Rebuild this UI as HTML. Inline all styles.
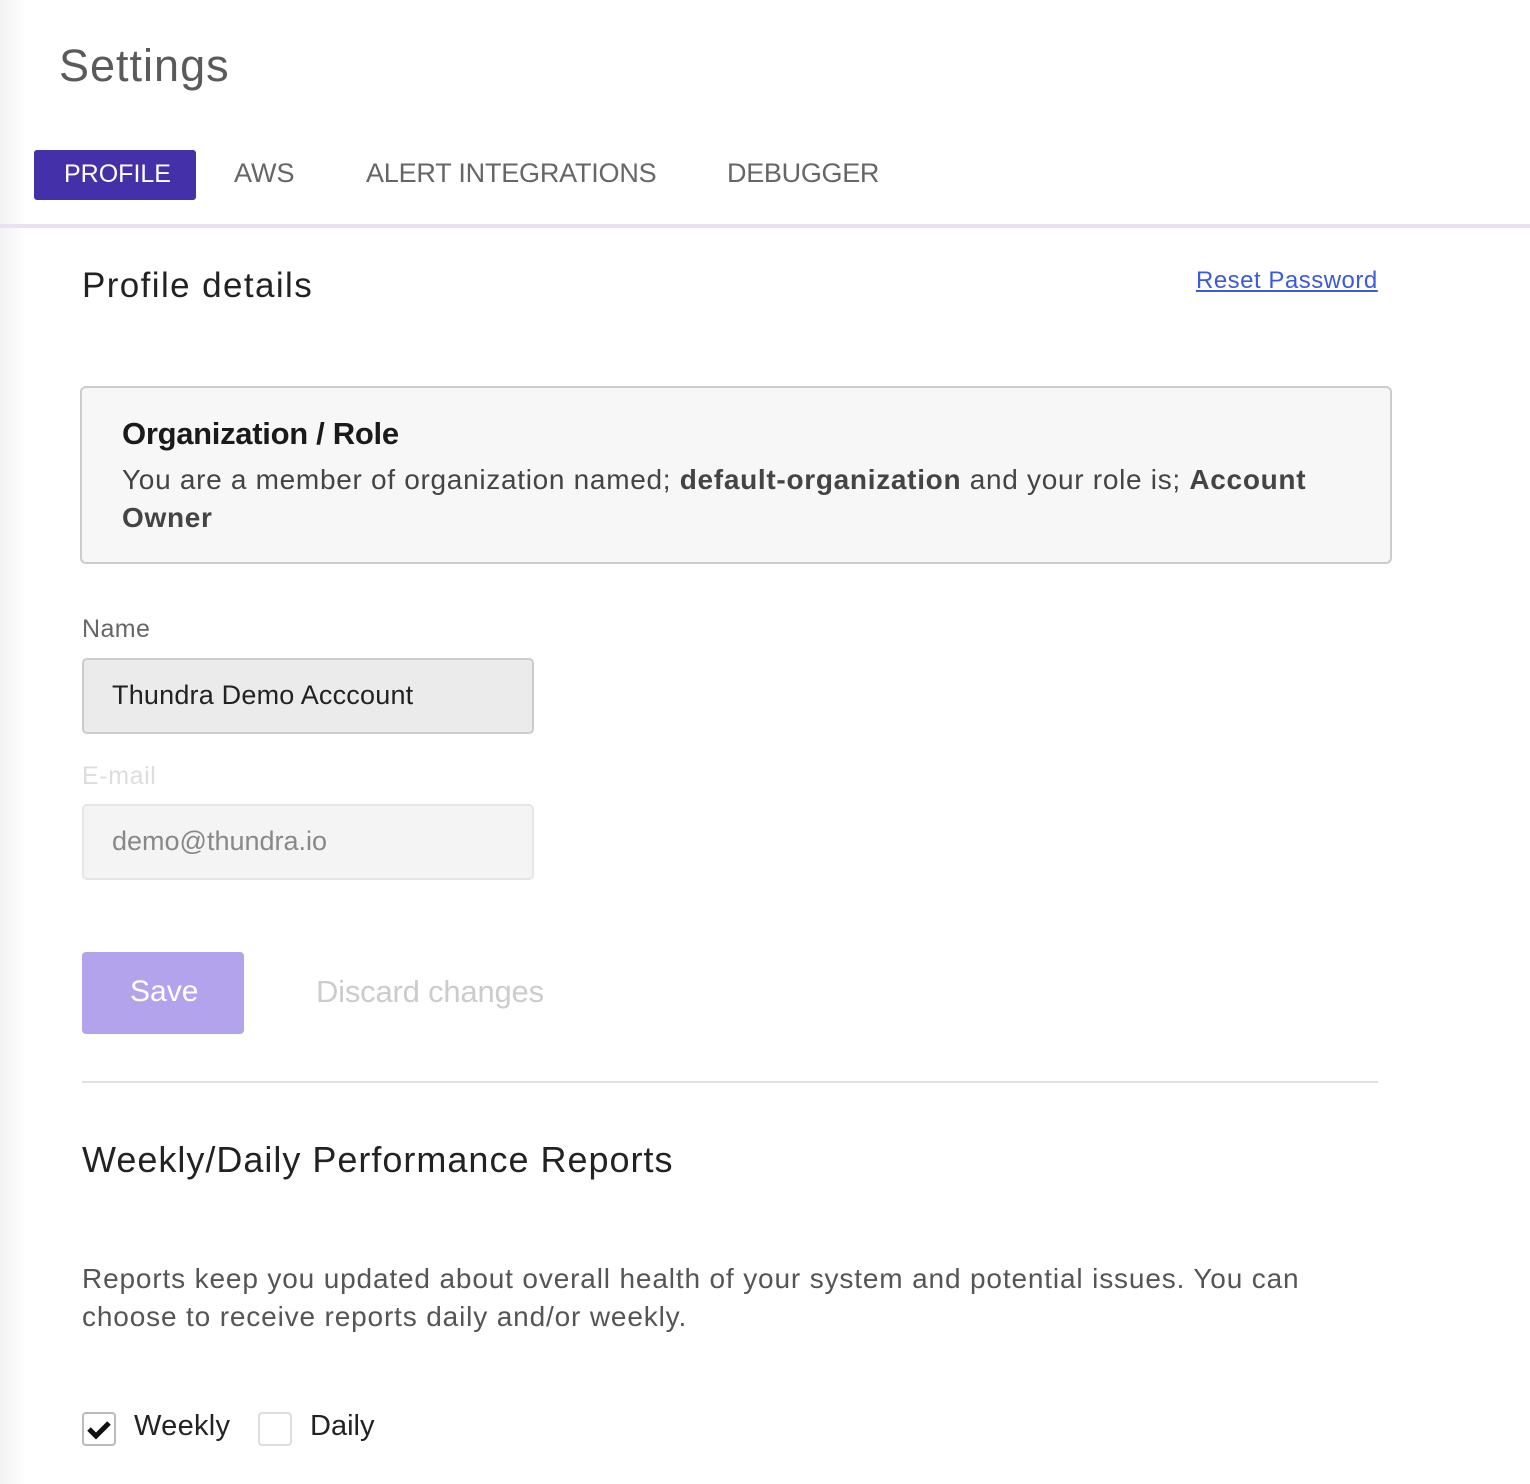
<!DOCTYPE html>
<html><head><meta charset="utf-8"><style>
html,body{margin:0;padding:0}
body{width:1530px;height:1484px;position:relative;background:#fff;font-family:"Liberation Sans",sans-serif;overflow:hidden}
.shadow{position:absolute;left:0;top:0;width:26px;height:1484px;background:linear-gradient(to right,#f2f2f2,#fff)}
.a{position:absolute;white-space:nowrap}
</style></head><body>
<div class="shadow"></div>
<div class="a" style="left:59px;top:40px;font-size:45px;color:#5a5a5a;letter-spacing:1px">Settings</div>
<div class="a" style="left:34px;top:150px;width:162px;height:50px;background:#4430a8;border-radius:3px"></div>
<div class="a" style="left:64px;top:160px;font-size:25px;color:#fff">PROFILE</div>
<div class="a" style="left:234px;top:158px;font-size:27px;color:#666">AWS</div>
<div class="a" style="left:366px;top:158px;font-size:27px;color:#666;letter-spacing:-0.2px">ALERT INTEGRATIONS</div>
<div class="a" style="left:727px;top:158px;font-size:27px;color:#666;letter-spacing:-0.3px">DEBUGGER</div>
<div class="a" style="left:0;top:224px;width:1530px;height:4px;background:#e8e2f0"></div>
<div class="a" style="left:82px;top:266px;font-size:35px;color:#222;letter-spacing:1.4px">Profile details</div>
<div class="a" style="left:1196px;top:267px;font-size:24px;color:#3b5bdb;text-decoration:underline;letter-spacing:0.5px">Reset Password</div>
<div class="a" style="left:80px;top:386px;width:1308px;height:174px;border:2px solid #ccc;border-radius:6px;background:#f7f7f7"></div>
<div class="a" style="left:122px;top:416px;font-size:31px;font-weight:bold;color:#1a1a1a;letter-spacing:-0.3px">Organization / Role</div>
<div class="a" style="left:122px;top:461px;font-size:28px;color:#444;line-height:38px;letter-spacing:0.7px">You are a member of organization named; <b>default-organization</b> and your role is; <b>Account</b><br><b>Owner</b></div>
<div class="a" style="left:82px;top:615px;font-size:25px;color:#666;letter-spacing:0.4px">Name</div>
<div class="a" style="left:82px;top:658px;width:448px;height:72px;border:2px solid #ccc;border-radius:5px;background:#ebebeb"></div>
<div class="a" style="left:112px;top:680px;font-size:27px;color:#222;letter-spacing:0.2px">Thundra Demo Acccount</div>
<div class="a" style="left:82px;top:762px;font-size:25px;color:#ddd;letter-spacing:0.6px">E-mail</div>
<div class="a" style="left:82px;top:804px;width:448px;height:72px;border:2px solid #e6e6e6;border-radius:5px;background:#f4f4f4"></div>
<div class="a" style="left:112px;top:826px;font-size:27px;color:#888">demo@thundra.io</div>
<div class="a" style="left:82px;top:952px;width:162px;height:82px;background:#b3a3ec;border-radius:4px"></div>
<div class="a" style="left:130px;top:975px;font-size:30px;color:#fff">Save</div>
<div class="a" style="left:316px;top:974px;font-size:31px;color:#ccc;letter-spacing:-0.2px">Discard changes</div>
<div class="a" style="left:82px;top:1081px;width:1296px;height:2px;background:#e2e2e2"></div>
<div class="a" style="left:82px;top:1139px;font-size:36px;color:#222;letter-spacing:1px">Weekly/Daily Performance Reports</div>
<div class="a" style="left:82px;top:1260px;font-size:28px;color:#555;line-height:38px;letter-spacing:0.85px">Reports keep you updated about overall health of your system and potential issues. You can<br>choose to receive reports daily and/or weekly.</div>
<div class="a" style="left:82px;top:1412px;width:30px;height:30px;border:2px solid #bbb;border-radius:4px;background:#fff"></div>
<svg class="a" style="left:84px;top:1414px" width="30" height="30" viewBox="0 0 30 30"><path d="M5 15 L12 22 L25 9" fill="none" stroke="#111" stroke-width="5"/></svg>
<div class="a" style="left:134px;top:1410px;font-size:29px;color:#222;letter-spacing:0.3px">Weekly</div>
<div class="a" style="left:258px;top:1412px;width:30px;height:30px;border:2px solid #ddd;border-radius:4px;background:#fff"></div>
<div class="a" style="left:310px;top:1410px;font-size:29px;color:#222">Daily</div>
</body></html>
